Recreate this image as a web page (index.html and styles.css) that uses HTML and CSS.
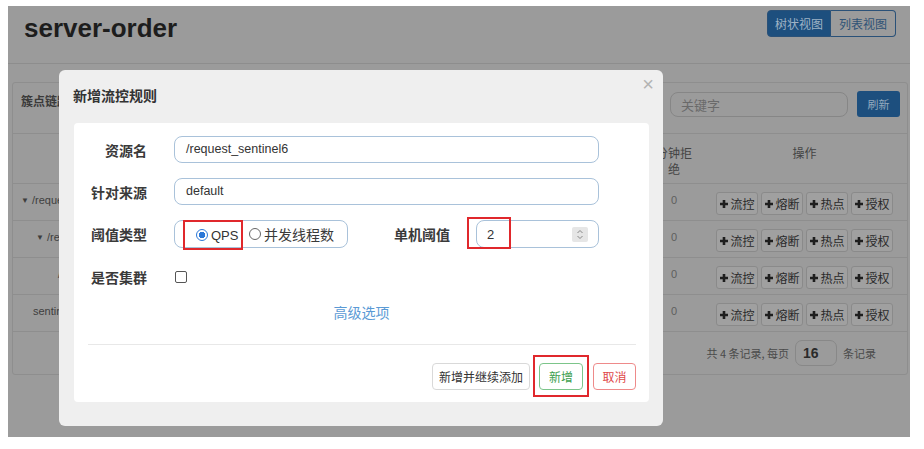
FILE: index.html
```html
<!DOCTYPE html>
<html lang="zh-CN">
<head>
<meta charset="utf-8">
<title>server-order</title>
<link rel="stylesheet" href="styles.css">
</head>
<body>
<div class="screen">
  <header class="top">
    <h1 class="app-title">server-order</h1>
    <div class="seg">
      <span class="seg-btn seg-active">树状视图</span>
      <span class="seg-btn">列表视图</span>
    </div>
  </header>

  <section class="card">
    <div class="card-head">
      <span class="card-title">簇点链路</span>
      <div class="search">关键字</div>
      <span class="refresh">刷新</span>
    </div>
    <table class="tree">
      <colgroup><col class="col-res"><col class="col-rej"><col class="col-op"></colgroup>
      <thead>
        <tr><th class="th-res"></th><th class="th-rej">分钟拒绝</th><th class="th-op">操作</th></tr>
      </thead>
      <tbody>
        <tr>
          <td class="res lv1"><span class="caret">▼</span> /request_sentinel6</td>
          <td class="num-cell">0</td>
          <td><div class="ops"><span class="op"><svg class="plus" viewBox="0 0 10 10"><path d="M5 1v8M1 5h8"/></svg>流控</span><span class="op"><svg class="plus" viewBox="0 0 10 10"><path d="M5 1v8M1 5h8"/></svg>熔断</span><span class="op"><svg class="plus" viewBox="0 0 10 10"><path d="M5 1v8M1 5h8"/></svg>热点</span><span class="op"><svg class="plus" viewBox="0 0 10 10"><path d="M5 1v8M1 5h8"/></svg>授权</span></div></td>
        </tr>
        <tr>
          <td class="res lv2"><span class="caret">▼</span> /request_sentinel6</td>
          <td class="num-cell">0</td>
          <td><div class="ops"><span class="op"><svg class="plus" viewBox="0 0 10 10"><path d="M5 1v8M1 5h8"/></svg>流控</span><span class="op"><svg class="plus" viewBox="0 0 10 10"><path d="M5 1v8M1 5h8"/></svg>熔断</span><span class="op"><svg class="plus" viewBox="0 0 10 10"><path d="M5 1v8M1 5h8"/></svg>热点</span><span class="op"><svg class="plus" viewBox="0 0 10 10"><path d="M5 1v8M1 5h8"/></svg>授权</span></div></td>
        </tr>
        <tr>
          <td class="res lv3">/request_sentinel6</td>
          <td class="num-cell">0</td>
          <td><div class="ops"><span class="op"><svg class="plus" viewBox="0 0 10 10"><path d="M5 1v8M1 5h8"/></svg>流控</span><span class="op"><svg class="plus" viewBox="0 0 10 10"><path d="M5 1v8M1 5h8"/></svg>熔断</span><span class="op"><svg class="plus" viewBox="0 0 10 10"><path d="M5 1v8M1 5h8"/></svg>热点</span><span class="op"><svg class="plus" viewBox="0 0 10 10"><path d="M5 1v8M1 5h8"/></svg>授权</span></div></td>
        </tr>
        <tr>
          <td class="res lv0">sentinel_default_context</td>
          <td class="num-cell">0</td>
          <td><div class="ops"><span class="op"><svg class="plus" viewBox="0 0 10 10"><path d="M5 1v8M1 5h8"/></svg>流控</span><span class="op"><svg class="plus" viewBox="0 0 10 10"><path d="M5 1v8M1 5h8"/></svg>熔断</span><span class="op"><svg class="plus" viewBox="0 0 10 10"><path d="M5 1v8M1 5h8"/></svg>热点</span><span class="op"><svg class="plus" viewBox="0 0 10 10"><path d="M5 1v8M1 5h8"/></svg>授权</span></div></td>
        </tr>
      </tbody>
    </table>
    <div class="pager">共 4 条记录, 每页<span class="page-size">16</span>条记录</div>
  </section>

  <div class="modal">
    <div class="modal-head">
      <span class="modal-title">新增流控规则</span>
      <span class="close">×</span>
    </div>
    <div class="panel">
      <div class="row">
        <span class="lbl">资源名</span>
        <div class="inp">/request_sentinel6</div>
      </div>
      <div class="row">
        <span class="lbl">针对来源</span>
        <div class="inp">default</div>
      </div>
      <div class="row row-tall">
        <span class="lbl">阈值类型</span>
        <div class="radios">
          <span class="mark"><span class="radio radio-on"></span><span class="rtxt">QPS</span></span>
          <span class="radio radio-off"></span><span class="rtxt rtxt-cn">并发线程数</span>
        </div>
        <span class="lbl lbl2">单机阈值</span>
        <div class="numbox">
          <span class="numval">2</span>
          <span class="spin">
            <svg viewBox="0 0 16 15" class="spin-ico"><path d="M5.5 6 8 3.5 10.5 6M5.5 9 8 11.5 10.5 9"/></svg>
          </span>
          <span class="redbox"></span>
        </div>
      </div>
      <div class="row row-tall row-last">
        <span class="lbl">是否集群</span>
        <span class="check"></span>
      </div>
      <div class="adv">高级选项</div>
      <div class="divider"></div>
      <div class="footer">
        <span class="btn">新增并继续添加</span>
        <span class="okwrap"><span class="btn btn-ok">新增</span></span>
        <span class="btn btn-cancel">取消</span>
      </div>
    </div>
  </div>
</div>
</body>
</html>
```
FILE: styles.css
```css
body {
  margin: 0;
  background: #ffffff;
  font-family: "Liberation Sans", "Noto Sans CJK SC", sans-serif;
}

.screen {
  position: relative;
  margin: 6px 0 0 8px;
  width: 902px;
  height: 431px;
  background: #9b9b9b;
  overflow: hidden;
}

/* ---------- background page ---------- */
.top {
  height: 58px;
  box-sizing: border-box;
  border-bottom: 1px solid #8d8d8d;
  display: flex;
  justify-content: space-between;
  align-items: flex-start;
  padding: 0 14px 0 16px;
}

.app-title {
  margin: 6px 0 0;
  font-size: 26px;
  line-height: 32px;
  font-weight: bold;
  color: #1d1d1d;
  font-family: "Liberation Sans", "Noto Sans", sans-serif;
}

.seg {
  display: flex;
  margin-top: 4px;
}

.seg-btn {
  height: 27px;
  box-sizing: border-box;
  width: 65px;
  border: 1px solid #2a5178;
  font-size: 12px;
  line-height: 25px;
  text-align: center;
  color: #2e5276;
  font-family: "Noto Sans CJK SC", sans-serif;
}

.seg-btn:first-child {
  border-radius: 4px 0 0 4px;
  width: 64px;
}

.seg-btn:last-child {
  border-radius: 0 4px 4px 0;
  border-left: none;
}

.seg-active {
  background: #1d4f7e;
  color: #9fb3c6;
}

.card {
  margin: 18px 2px 0 4px;
  height: 293px;
  box-sizing: border-box;
  border: 1px solid #8e8e8e;
  border-radius: 3px;
}

.card-head {
  height: 51px;
  box-sizing: border-box;
  border-bottom: 1px solid #8e8e8e;
  display: flex;
  align-items: flex-start;
  padding: 0 7px 0 8px;
}

.card-title {
  margin-top: 10px;
  font-size: 12px;
  line-height: 16px;
  font-weight: bold;
  color: #3a3a3a;
  font-family: "Noto Sans CJK SC", sans-serif;
}

.search {
  margin-left: auto;
  margin-top: 9px;
  width: 178px;
  height: 25px;
  box-sizing: border-box;
  border: 1px solid #868686;
  border-radius: 8px;
  padding-left: 10px;
  font-size: 13px;
  line-height: 23px;
  color: #6a6a6a;
  font-family: "Noto Sans CJK SC", sans-serif;
}

.refresh {
  margin-left: 9px;
  margin-top: 8px;
  width: 43px;
  height: 26px;
  border-radius: 3px;
  background: #1d4f7e;
  color: #93a9bd;
  font-size: 11px;
  line-height: 26px;
  text-align: center;
  font-family: "Noto Sans CJK SC", sans-serif;
}

.tree {
  width: 100%;
  border-collapse: collapse;
  table-layout: fixed;
  font-size: 12px;
  color: #3c3c3c;
}

.col-res { width: 633px; }
.col-rej { width: 56px; }

.tree th {
  height: 38px;
  padding: 11px 8px 0;
  vertical-align: top;
  font-weight: normal;
  font-size: 12px;
  line-height: 16px;
  color: #444;
  border-bottom: 1px solid #8e8e8e;
  font-family: "Noto Sans CJK SC", sans-serif;
  text-align: center;
}

.tree td {
  height: 23px;
  padding: 8px 8px 5px;
  vertical-align: top;
  line-height: 16px;
  border-bottom: 1px solid #8e8e8e;
}

.res {
  font-size: 11px;
  color: #3e3e3e;
  white-space: nowrap;
  overflow: hidden;
}

.caret {
  font-size: 8px;
  vertical-align: 1px;
}

.tree .lv1 { padding-left: 8px; }
.tree .lv2 { padding-left: 23px; }
.tree .lv3 { padding-left: 45px; }
.tree .lv0 { padding-left: 20px; }

.tree .num-cell {
  text-align: center;
  font-size: 11px;
  color: #5e5e5e;
}

.ops {
  display: flex;
  justify-content: center;
  gap: 3px;
}

.op {
  width: 42px;
  height: 23px;
  box-sizing: border-box;
  border: 1px solid #8a8a8a;
  border-radius: 3px;
  background: #a0a0a0;
  display: flex;
  align-items: center;
  justify-content: center;
  gap: 1px;
  font-size: 12px;
  color: #2a2a2a;
  font-family: "Noto Sans CJK SC", sans-serif;
}

.plus {
  width: 10px;
  height: 10px;
  fill: none;
  stroke: #1e1e1e;
  stroke-width: 2.6;
}

.pager {
  height: 42px;
  display: flex;
  align-items: center;
  justify-content: flex-end;
  padding-right: 31px;
  font-size: 11px;
  color: #4a4a4a;
  font-family: "Noto Sans CJK SC", sans-serif;
}

.page-size {
  width: 42px;
  height: 26px;
  box-sizing: border-box;
  border: 1px solid #888;
  border-radius: 7px;
  margin: 0 6px;
  padding-left: 7px;
  font-size: 14px;
  line-height: 24px;
  font-weight: bold;
  color: #2a2a2a;
  font-family: "Liberation Sans", sans-serif;
}

/* ---------- modal ---------- */
.modal {
  position: absolute;
  left: 51px;
  top: 64px;
  width: 604px;
  height: 356px;
  background: #efefef;
  border-radius: 6px;
}

.modal-head {
  position: relative;
  height: 53px;
  box-sizing: border-box;
  padding: 17px 0 0 14px;
}

.modal-title {
  font-size: 14px;
  line-height: 16px;
  font-weight: bold;
  color: #333;
  font-family: "Noto Sans CJK SC", sans-serif;
}

.close {
  position: absolute;
  right: 9px;
  top: 4px;
  font-size: 20px;
  line-height: 20px;
  color: #b3b3b3;
}

.panel {
  margin: 0 14px 0 15px;
  height: 279px;
  box-sizing: border-box;
  background: #ffffff;
  border-radius: 4px;
  padding-top: 13px;
}

.row {
  display: flex;
  align-items: center;
  height: 27px;
  margin-bottom: 15px;
}

.row-tall { height: 28px; }
.row-last { margin-bottom: 0; }

.lbl {
  width: 73px;
  margin-right: 27px;
  text-align: right;
  font-size: 14px;
  font-weight: bold;
  color: #3a3a3a;
  font-family: "Noto Sans CJK SC", sans-serif;
  white-space: nowrap;
}

.inp {
  width: 425px;
  height: 27px;
  box-sizing: border-box;
  border: 1px solid #a9c2da;
  border-radius: 8px;
  padding-left: 11px;
  font-size: 12.5px;
  line-height: 25px;
  color: #333;
}

.radios {
  width: 174px;
  height: 28px;
  box-sizing: border-box;
  border: 1px solid #a9c2da;
  border-radius: 8px;
  padding-left: 8px;
  display: flex;
  align-items: center;
  font-size: 13px;
  color: #333;
}

.mark {
  align-self: flex-start;
  margin-top: -1px;
  width: 60px;
  height: 30px;
  box-sizing: border-box;
  border: 2px solid #e0282c;
  padding-left: 11px;
  display: flex;
  align-items: center;
}

.radio {
  width: 12px;
  height: 12px;
  box-sizing: border-box;
  border-radius: 50%;
  flex: none;
}

.radio-on {
  border: 1px solid #2b78d8;
  background: radial-gradient(circle, #2b78d8 0 3px, #fff 3.5px);
}

.radio-off {
  margin-left: 6px;
  border: 1px solid #666;
}

.rtxt {
  margin-left: 3px;
}

.rtxt-cn {
  font-size: 14px;
  font-family: "Noto Sans CJK SC", sans-serif;
  color: #3a3a3a;
}

.lbl2 {
  width: 56px;
  margin-left: 46px;
  margin-right: 26px;
}

.numbox {
  position: relative;
  width: 123px;
  height: 28px;
  box-sizing: border-box;
  border: 1px solid #a9c2da;
  border-radius: 8px;
  padding: 0 10px;
  display: flex;
  align-items: center;
  justify-content: space-between;
  font-size: 13px;
  color: #333;
}

.spin {
  width: 16px;
  height: 15px;
  border-radius: 2px;
  background: #e6e6e6;
  display: flex;
}

.spin-ico {
  width: 16px;
  height: 15px;
  fill: none;
  stroke: #888;
  stroke-width: 1;
}

.redbox {
  position: absolute;
  left: -10px;
  top: -4px;
  width: 44px;
  height: 32px;
  box-sizing: border-box;
  border: 2px solid #e0282c;
}

.check {
  width: 12px;
  height: 12px;
  box-sizing: border-box;
  border: 1px solid #555;
  border-radius: 2px;
  margin-left: 1px;
}

.adv {
  margin-top: 12px;
  text-align: center;
  font-size: 14px;
  line-height: 18px;
  color: #5a9ad5;
  font-family: "Noto Sans CJK SC", sans-serif;
}

.divider {
  margin: 23px 13px 0 14px;
  border-top: 1px solid #e8e8e8;
}

.footer {
  display: flex;
  justify-content: flex-end;
  align-items: center;
  padding: 10px 13px 0 0;
}

.btn {
  height: 27px;
  box-sizing: border-box;
  border: 1px solid #d9d9d9;
  border-radius: 4px;
  background: #fff;
  padding: 0 6px;
  font-size: 12px;
  line-height: 25px;
  color: #333;
  font-family: "Noto Sans CJK SC", sans-serif;
}

.okwrap {
  margin: 0 4px 0 3px;
  width: 56px;
  height: 42px;
  box-sizing: border-box;
  border: 2px solid #e0282c;
  display: flex;
  align-items: center;
  justify-content: center;
}

.btn-ok {
  width: 44px;
  padding: 0;
  text-align: center;
  border-color: #7cc58a;
  color: #3da04f;
}

.btn-cancel {
  width: 43px;
  padding: 0;
  text-align: center;
  border-color: #ee8a8a;
  color: #e04848;
}
```
